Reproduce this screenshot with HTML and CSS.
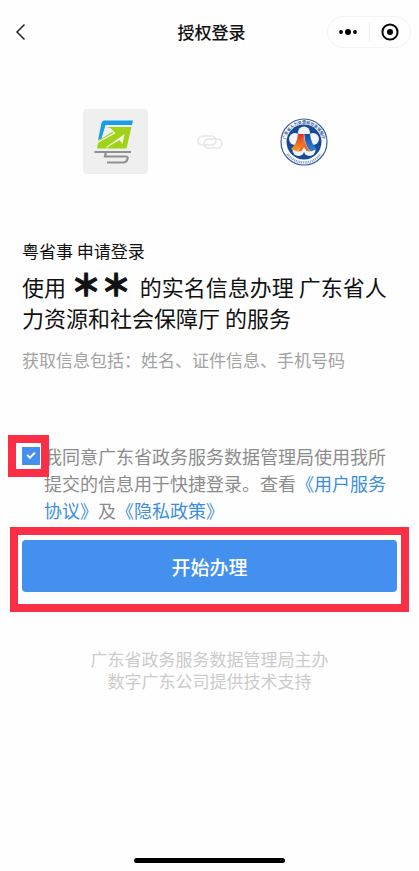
FILE: index.html
```html
<!DOCTYPE html>
<html lang="zh-CN">

<head>
  <meta charset="UTF-8">
  <meta name="viewport" content="width=device-width, initial-scale=1.0">
  <title>授权登录</title>
  <link rel="stylesheet" href="styles.css">
</head>

<body>
  <header class="navbar">
    <div class="nav-side">
      <button class="icon-btn back-btn" type="button" aria-label="返回">
        <svg width="12" height="18" viewBox="0 0 12 18" fill="none" stroke="#222" stroke-width="1.5">
          <path d="M10.500 1.500 3 9l7.500 7.500" />
        </svg>
      </button>
    </div>
    <h1 class="nav-title">授权登录</h1>
    <div class="nav-side nav-right">
      <div class="capsule">
        <button class="icon-btn" type="button" aria-label="更多">
          <svg width="20" height="8" viewBox="0 0 20 8" fill="#000">
            <circle cx="3" cy="4" r="1.900" />
            <circle cx="10" cy="4" r="3" />
            <circle cx="17" cy="4" r="1.900" />
          </svg>
        </button>
        <span class="capsule-line"></span>
        <button class="icon-btn" type="button" aria-label="关闭">
          <svg width="18" height="18" viewBox="0 0 18 18">
            <circle cx="9" cy="9" r="7.600" fill="none" stroke="#000" stroke-width="2" />
            <circle cx="9" cy="9" r="3" fill="#000" />
          </svg>
        </button>
      </div>
    </div>
  </header>

  <main class="container">
    <div class="logos">
      <div class="app-logo">
        <svg width="65" height="65" viewBox="0 0 65 65">
          <path d="M21 11.500H50L49 16H22.500L18.500 29.500 15 31 18.500 14Q19 11.500 21 11.500Z" fill="#1b9ee8" />
          <path d="M24.500 18H48.500L43.500 39.500H14L15.500 31.500 30 22.500Z" fill="#a0d21a" />
          <path d="M14.500 33.500 31.500 24 26.500 19" fill="none" stroke="#f3f8e4" stroke-width="1.200" />
          <path d="M41.500 25 39.500 35 36.500 31 24 38.500 22.500 38.500 36 29Z" fill="#f3f8e4" />
          <path d="M11.500 43H48M23 43 22 47.500H42.500Q45.500 47.500 44.500 50 43.500 53.500 40 53.500H24" fill="none" stroke="#909093" stroke-width="2.200" />
        </svg>
      </div>
      <svg class="link-icon" width="26" height="16" viewBox="0 0 26 16" fill="none" stroke="#e6e6e6" stroke-width="1.600">
        <rect x="1" y="2" width="18" height="9" rx="4.500" />
        <rect x="7" y="5" width="18" height="9" rx="4.500" />
      </svg>
      <svg class="dept-logo" width="48" height="48" viewBox="0 0 48 48">
        <defs>
          <linearGradient id="warm" x1="0" y1="0" x2="0" y2="1">
            <stop offset="0" stop-color="#d9302c" />
            <stop offset="1" stop-color="#f9a51b" />
          </linearGradient>
          <linearGradient id="cool" x1="0" y1="0" x2="0" y2="1">
            <stop offset="0" stop-color="#174b9c" />
            <stop offset="1" stop-color="#2d86d6" />
          </linearGradient>
          <path id="ring" d="M8.200 33A18.200 18.200 0 1 1 39.800 33" />
        </defs>
        <circle cx="24" cy="24" r="23" fill="#fff" stroke="#3a5f9f" stroke-width="1.200" />
        <text class="ring-text"><textPath href="#ring" startOffset="50%" text-anchor="middle">广东省人力资源和社会保障厅</textPath></text>
        <path d="M7.500 36A20.300 20.300 0 0 0 40.500 36" fill="none" stroke="#7e98c4" stroke-width="2.200" stroke-dasharray="1 .8" />
        <circle cx="24" cy="24" r="17.500" fill="#17489a" />
        <g fill="#f1f5fc">
          <circle cx="24" cy="14.500" r="6" />
          <circle cx="33" cy="21" r="6" />
          <circle cx="29.500" cy="32" r="6" />
          <circle cx="18.500" cy="32" r="6" />
          <circle cx="15" cy="21" r="6" />
          <circle cx="24" cy="24" r="9" />
        </g>
        <path d="M18 16H23.800V23Q22 29 17 33.500L11 31Q17 26 18 16Z" fill="url(#warm)" />
        <path d="M24.200 16H30Q31 26 37 31L31 33.500Q25 29 24.200 16Z" fill="url(#cool)" />
        <path d="M24 19Q25 28 30.500 33.500L26.500 33 24 29 21.500 33 17.500 33.500Q23 28 24 19Z" fill="#f26a21" />
      </svg>
    </div>

    <section class="intro">
      <p class="app-name">粤省事 申请登录</p>
      <h2 class="service">使用 <span class="mask">＊＊</span> 的实名信息办理 广东省人力资源和社会保障厅 的服务</h2>
      <p class="scope">获取信息包括：姓名、证件信息、手机号码</p>
    </section>

    <div class="agreement">
      <span class="check-wrap">
        <input class="check" type="checkbox" id="agree" checked>
      </span>
      <p class="agree-text"><label for="agree">我同意广东省政务服务数据管理局使用我所提交的信息用于快捷登录。查看</label><a href="#">《用户服务协议》</a>及<a href="#">《隐私政策》</a></p>
    </div>

    <div class="submit-frame">
      <button class="submit-btn" type="button">开始办理</button>
    </div>
  </main>

  <footer class="footer">
    <p>广东省政务服务数据管理局主办</p>
    <p>数字广东公司提供技术支持</p>
  </footer>

  <div class="home-bar"></div>
</body>

</html>
```

FILE: styles.css
```css
* {
  margin: 0;
  padding: 0;
  box-sizing: border-box;
}

body {
  min-height: 100vh;
  display: flex;
  flex-direction: column;
  background-color: #fefefe;
  color: #111;
  font-family: "Noto Sans CJK SC", "PingFang SC", "Microsoft YaHei", sans-serif;
  font-size: 17px;
}

button {
  font-family: inherit;
  border: none;
  cursor: pointer;
}

a {
  color: #3c8edb;
  text-decoration: none;
}

/* 顶部导航 */
.navbar {
  display: flex;
  align-items: center;
  padding: 16px 8px 0 12px;
}

.nav-side {
  flex: 1;
  display: flex;
}

.nav-right {
  justify-content: flex-end;
}

.nav-title {
  font-size: 17px;
  font-weight: 500;
  line-height: 32px;
}

.icon-btn {
  display: flex;
  align-items: center;
  justify-content: center;
  flex: 1;
  height: 30px;
  background: none;
}

.back-btn {
  flex: none;
  width: 16px;
}

.capsule {
  display: flex;
  align-items: center;
  width: 84px;
  height: 32px;
  border: 1px solid #f4f4f4;
  border-radius: 16px;
}

.capsule-line {
  width: 1px;
  height: 18px;
  background-color: #eee;
}

/* 图标 */
.container {
  padding: 61px 22px 0;
}

.logos {
  display: flex;
  align-items: center;
  justify-content: space-between;
  padding: 0 69px 0 61px;
  margin-bottom: 63px;
}

.app-logo {
  width: 65px;
  height: 65px;
  background-color: #efefef;
  border-radius: 4px;
}

.link-icon {
  margin-right: 8px;
}

.dept-logo {
  overflow: visible;
}

.ring-text {
  font-size: 4px;
  font-weight: bold;
  fill: #31579b;
}

/* 说明文字 */
.intro {
  margin-bottom: 70px;
}

.app-name {
  line-height: 28px;
  margin-bottom: 6px;
}

.service {
  font-size: 22px;
  font-weight: 400;
  line-height: 31px;
  margin-bottom: 14px;
}

.mask {
  margin-right: 4px;
  font-size: 30px;
  font-weight: 900;
  line-height: 0;
  -webkit-text-stroke: 1px #111;
}

.scope {
  color: #a2a2a2;
  line-height: 26px;
}

/* 协议 */
.agreement {
  display: flex;
  gap: 4px;
  margin-bottom: 3px;
}

.check-wrap {
  position: relative;
  flex: none;
  width: 18px;
  height: 18px;
  margin-top: 4px;
}

.check-wrap::after {
  content: "";
  position: absolute;
  inset: -12px -9px -12px -14px;
  border: 8px solid #fa2f45;
  pointer-events: none;
}

.check {
  display: block;
  appearance: none;
  width: 18px;
  height: 18px;
  background-color: #4390ee;
}

.check:checked::after {
  content: "";
  display: block;
  width: 6px;
  height: 3px;
  margin: 5px auto 0;
  border: solid #fff;
  border-width: 0 0 2px 2px;
  transform: rotate(-45deg);
}

.agree-text {
  color: #8c8c8c;
  font-size: 18px;
  line-height: 27px;
}

/* 按钮 */
.submit-frame {
  margin: 0 -12px;
  padding: 5px 4px 12px;
  border: 8px solid #fa2f45;
}

.submit-btn {
  display: block;
  width: 100%;
  height: 52px;
  border-radius: 4px;
  background-color: #4390ee;
  color: #fff;
  font-size: 19px;
  font-weight: 500;
}

.footer {
  padding-top: 36px;
  color: #cbcbcb;
  line-height: 22px;
  text-align: center;
}

.home-bar {
  width: 36%;
  height: 5px;
  margin: auto auto 8px;
  border-radius: 3px;
  background-color: #000;
}
```
